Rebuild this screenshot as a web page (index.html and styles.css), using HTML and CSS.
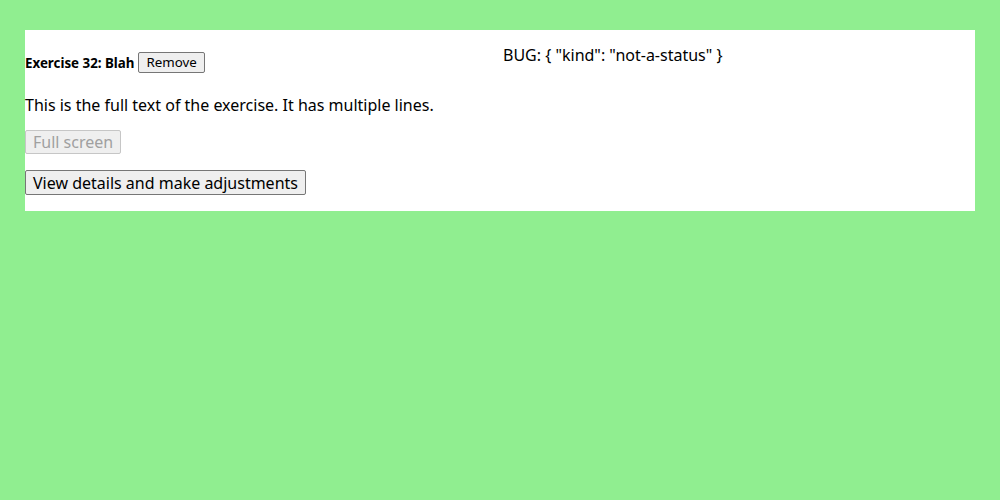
FILE: index.html
```html
<!DOCTYPE html>
<html>
<head>
<meta charset="utf-8">
<link rel="stylesheet" href="styles.css">
</head>
<body>
<div class="card">
  <div class="col left">
    <div class="title-row">
      <span class="title">Exercise 32: Blah</span>
      <button class="btn small">Remove</button>
    </div>
    <p class="text">This is the full text of the exercise. It has multiple lines.</p>
    <div class="row"><button class="btn" disabled>Full screen</button></div>
    <div class="row last"><button class="btn">View details and make adjustments</button></div>
  </div>
  <div class="col right">
    <div class="bug">BUG: { "kind": "not-a-status" }</div>
  </div>
</div>
</body>
</html>
```
FILE: styles.css
```css
html, body {
  margin: 0;
  padding: 0;
  background: #90ee90;
  font-family: "Noto Sans", "Open Sans", sans-serif;
  color: #000;
}
body {
  padding: 30px 25px;
}
.card {
  background: #fff;
  display: grid;
  grid-template-columns: 1fr 1fr;
}
.col.left {
  padding-top: 22px;
}
.title-row {
  display: flex;
  align-items: center;
  gap: 4px;
  height: 21px;
}
.title {
  font-size: 13.33px;
  font-weight: bold;
}
.btn {
  font-family: "Noto Sans", "Open Sans", sans-serif;
  font-size: 16px;
  line-height: 20px;
  padding: 1px 7px;
  margin: 0;
  border: 1px solid #767676;
  border-radius: 2px;
  background: #efefef;
  color: #000;
}
.btn:disabled {
  color: #a0a0a0;
  border-color: #c6c6c6;
  background: #efefef;
}
.btn.small {
  font-size: 13.33px;
  line-height: 17px;
  padding: 1px 7px;
}
.text {
  font-size: 16px;
  line-height: 22px;
  margin: 21px 0 14px;
}
.row {
  height: 24px;
  margin-bottom: 16px;
  display: flex;
}
.row.last {
  height: 25px;
}
.col.right {
  padding-left: 3px;
  padding-top: 14px;
}
.bug {
  font-size: 16px;
  line-height: 22px;
}
```
